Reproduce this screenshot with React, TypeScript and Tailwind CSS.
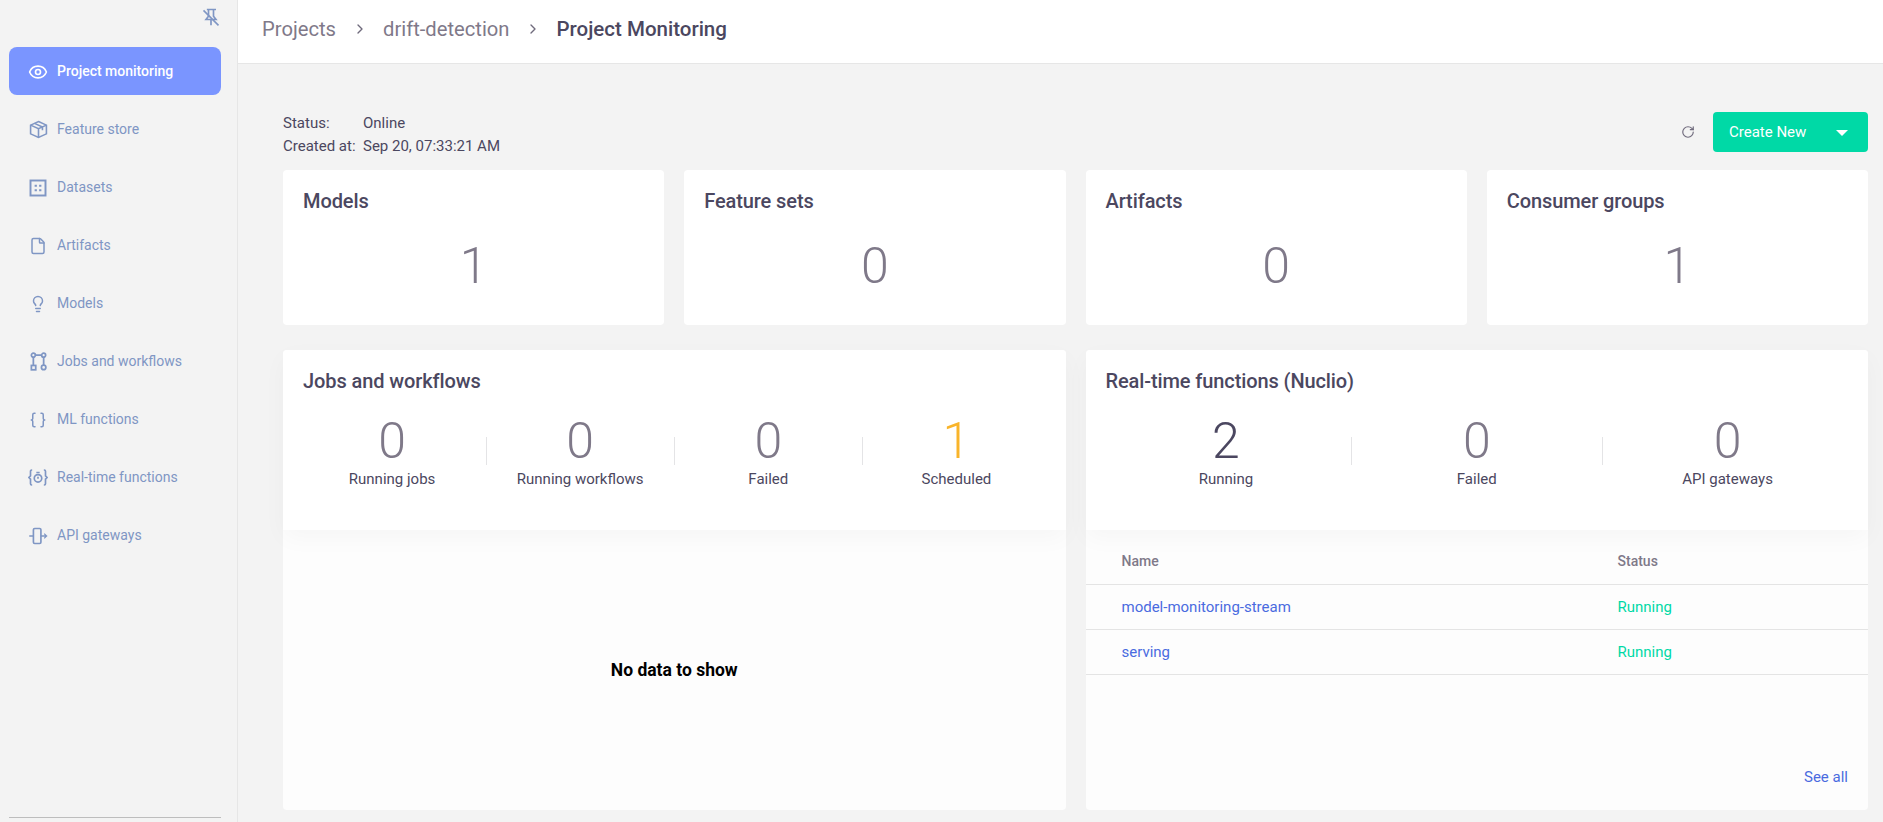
import { Eye, File, Lightbulb, Braces, RotateCw, ChevronRight } from 'lucide-react'
import type { ReactNode } from 'react'

const ico = { width: 18, height: 18, viewBox: '0 0 24 24', fill: 'none', stroke: 'currentColor', strokeWidth: 2 }

const NAV: { label: string; icon: ReactNode }[] = [
  { label: 'Project monitoring', icon: <Eye size={20} strokeWidth={2} /> },
  {
    label: 'Feature store',
    icon: (
      <svg {...ico} width={19} height={19}>
        <path d="M12 2 22 6.500v11L12 22 2 17.500v-11z" />
        <path d="M2 6.500 12 11l10-4.500M12 11v11M7 4.300l10 4.700v4" />
      </svg>
    ),
  },
  {
    label: 'Datasets',
    icon: (
      <svg {...ico} strokeWidth={2.6}>
        <rect x="2" y="2" width="20" height="20" />
        <path d="M7.500 9h3M13.500 9h3M7.500 15h3M13.500 15h3" />
      </svg>
    ),
  },
  { label: 'Artifacts', icon: <File size={18} strokeWidth={2} /> },
  { label: 'Models', icon: <Lightbulb size={18} strokeWidth={2} /> },
  {
    label: 'Jobs and workflows',
    icon: (
      <svg {...ico} width={19} height={19} strokeWidth={2.2}>
        <circle cx="5.500" cy="4" r="2.500" />
        <circle cx="18.500" cy="4" r="2.500" />
        <rect x="3" y="17" width="5.500" height="5.500" />
        <circle cx="18.500" cy="19.500" r="2.800" />
        <path d="M5.500 6.500V17M18.500 6.500v10.200M8 4h8" />
      </svg>
    ),
  },
  { label: 'ML functions', icon: <Braces size={18} strokeWidth={2} /> },
  {
    label: 'Real-time functions',
    icon: (
      <svg {...ico} width={21} height={21}>
        <path d="M5 3H4.500A1.500 1.500 0 0 0 3 4.500V10l-2 2 2 2v5.500A1.500 1.500 0 0 0 4.500 21H5M19 3h.5A1.500 1.500 0 0 1 21 4.500V10l2 2-2 2v5.500a1.500 1.500 0 0 1-1.500 1.500H19" />
        <circle cx="12" cy="13" r="4.500" />
        <path d="M12 11v2.500M10 6h4" />
      </svg>
    ),
  },
  {
    label: 'API gateways',
    icon: (
      <svg {...ico} width={20} height={20}>
        <rect x="6.500" y="3" width="9" height="18" rx="1.500" />
        <path d="M1.500 12h5M15.500 12h4" />
        <path d="M19.500 8.500v7l4-3.500z" fill="currentColor" stroke="none" />
      </svg>
    ),
  },
]

const TOP_CARDS = [
  { title: 'Models', value: 1 },
  { title: 'Feature sets', value: 0 },
  { title: 'Artifacts', value: 0 },
  { title: 'Consumer groups', value: 1 },
]

const JOBS = [
  { label: 'Running jobs', value: 0, color: 'text-[#7f7989]' },
  { label: 'Running workflows', value: 0, color: 'text-[#7f7989]' },
  { label: 'Failed', value: 0, color: 'text-[#7f7989]' },
  { label: 'Scheduled', value: 1, color: 'text-[#f9b42a]' },
]

const NUCLIO = [
  { label: 'Running', value: 2, color: 'text-[#4b4760]' },
  { label: 'Failed', value: 0, color: 'text-[#7f7989]' },
  { label: 'API gateways', value: 0, color: 'text-[#7f7989]' },
]

const FUNCTIONS = ['model-monitoring-stream', 'serving']

function Stats({ items }: { items: { label: string; value: number; color: string }[] }) {
  return (
    <div className="flex px-[15px] mt-[19px]">
      {items.map((s, i) => (
        <div key={s.label} className="relative flex-1 flex flex-col items-center">
          <div className={`text-[50px] font-light leading-[58px] ${s.color}`}>{s.value}</div>
          <div className="text-[15px] leading-[20px] mt-[-1px] text-[#4b4760]">{s.label}</div>
          {i > 0 && <div className="absolute left-0 top-[25px] h-[28px] w-px bg-[#e4e4e6]" />}
        </div>
      ))}
    </div>
  )
}

function PanelHead({ title, children }: { title: string; children: ReactNode }) {
  return (
    <div className="h-[180px] bg-white rounded-t shrink-0 relative z-10 shadow-[0_8px_24px_rgba(0,0,0,0.03)]">
      <h2 className="px-[20px] pt-[19px] text-[20px] leading-[24px] font-medium text-[#4b4760] tracking-[-0.1px]">{title}</h2>
      {children}
    </div>
  )
}

export default function App() {
  return (
    <div className="h-[822px] overflow-hidden flex bg-[#f3f3f3] font-['Roboto',sans-serif]">
      <aside className="w-[238px] shrink-0 border-r border-[#e6e6e6] flex flex-col pl-[9px] pr-[16px]">
        <div className="h-[47px] pt-[6px] flex justify-end">
          <svg width="20" height="20" viewBox="0 0 24 24" fill="none" stroke="#7f96c4" strokeWidth="2" className="mt-px">
            <path d="M7 3h11M9 3v8l-3 4h12l-3-4V3M12 15v7" />
            <path d="M3 4l18 18" />
          </svg>
        </div>
        <nav className="flex flex-col gap-[10px]">
          {NAV.map((n, i) => (
            <a
              key={n.label}
              className={`h-[48px] pt-[1px] rounded-lg flex items-center pl-[19px] text-[14px] ${i === 0 ? 'bg-[#7a95ff] text-white font-medium' : 'text-[#7f96c4]'}`}
            >
              <span className="w-[20px] flex justify-center shrink-0">{n.icon}</span>
              <span className="ml-[9px]">{n.label}</span>
            </a>
          ))}
        </nav>
        <div className="mt-auto mb-[4px] h-px bg-[#bdbdbd]" />
      </aside>

      <main className="flex-1 min-w-0 flex flex-col">
        <header className="h-[64px] shrink-0 pb-[5px] bg-white border-b border-[#e6e6e6] flex items-center pl-[24px] text-[20.2px] text-[#7f7989]">
          <span>Projects</span>
          <ChevronRight size={16} strokeWidth={2} className="mx-[15.5px] text-[#6f6a7c]" />
          <span>drift-detection</span>
          <ChevronRight size={16} strokeWidth={2} className="mx-[15.5px] text-[#6f6a7c]" />
          <span className="font-medium text-[20.5px] text-[#4b4760]">Project Monitoring</span>
        </header>

        <div className="flex-1 min-h-0 pl-[45px] pr-[15px] pt-[48px]">
          <div className="flex items-start justify-between h-[58px]">
            <div className="grid grid-cols-[80px_auto] text-[15px] leading-[23px] text-[#4b4760]">
              <span>Status:</span>
              <span>Online</span>
              <span>Created at:</span>
              <span>Sep 20, 07:33:21 AM</span>
            </div>
            <div className="flex items-center">
              <RotateCw size={14} strokeWidth={2} className="text-[#6f6a7c] mr-[18px]" />
              <button className="w-[155px] h-[40px] pt-px rounded bg-[#00d9a6] text-white text-[15px] font-normal flex items-center pl-[16px] pr-[20px] justify-between">
                Create New
                <span className="w-0 h-0 border-x-[6px] border-x-transparent border-t-[6px] border-t-white" />
              </button>
            </div>
          </div>

          <div className="grid grid-cols-4 gap-[20px]">
            {TOP_CARDS.map(c => (
              <div key={c.title} className="h-[155px] bg-white rounded px-[20px] pt-[19px]">
                <h2 className="text-[20px] leading-[24px] font-medium text-[#4b4760] tracking-[-0.1px]">{c.title}</h2>
                <div className="text-center text-[50px] font-light leading-[58px] mt-[24px] text-[#7f7989]">{c.value}</div>
              </div>
            ))}
          </div>

          <div className="grid grid-cols-2 gap-[20px] mt-[25px] h-[460px]">
            <section className="bg-[#fdfdfd] rounded flex flex-col">
              <PanelHead title="Jobs and workflows">
                <Stats items={JOBS} />
              </PanelHead>
              <div className="flex-1 flex items-center justify-center text-[17.5px] font-bold text-black">No data to show</div>
            </section>

            <section className="bg-[#fdfdfd] rounded flex flex-col">
              <PanelHead title="Real-time functions (Nuclio)">
                <Stats items={NUCLIO} />
              </PanelHead>
              <div className="flex-1 flex flex-col text-[15px]">
                <div className="h-[55px] pt-[9px] flex items-center border-b border-[#e4e4e4] text-[14px] font-medium text-[#7f7989]">
                  <span className="w-[532px] pl-[36px]">Name</span>
                  <span>Status</span>
                </div>
                {FUNCTIONS.map(f => (
                  <div key={f} className="h-[45px] flex items-center border-b border-[#e4e4e4]">
                    <span className="w-[532px] pl-[36px] text-[#4a6be0]">{f}</span>
                    <span className="text-[#00d9a6]">Running</span>
                  </div>
                ))}
                <div className="mt-auto pb-[22px] pr-[20px] text-right text-[#4a6be0]">See all</div>
              </div>
            </section>
          </div>
        </div>
      </main>
    </div>
  )
}
